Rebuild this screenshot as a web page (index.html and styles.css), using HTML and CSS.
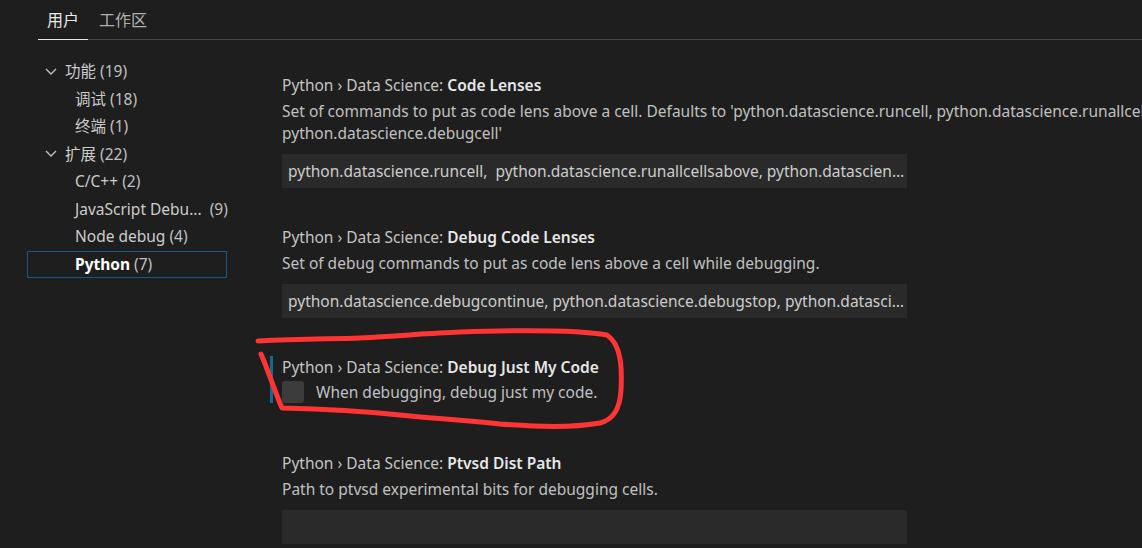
FILE: index.html
```html
<!DOCTYPE html>
<html>
<head>
  <title>Settings</title>
  <link rel="stylesheet" href="styles.css">
</head>
<body>
  <div class="tabs">
    <div class="tab active">用户</div>
    <div class="tab">工作区</div>
  </div>

  <div class="main">
    <div class="tree">
      <div class="row group"><span class="chev"><svg width="12" height="8" viewBox="0 0 12 8"><path d="M1 1l5 5 5-5" fill="none" stroke="#c5c5c5" stroke-width="1.3"/></svg></span>功能 <span class="count">(19)</span></div>
      <div class="row child">调试 <span class="count">(18)</span></div>
      <div class="row child">终端 <span class="count">(1)</span></div>
      <div class="row group"><span class="chev"><svg width="12" height="8" viewBox="0 0 12 8"><path d="M1 1l5 5 5-5" fill="none" stroke="#c5c5c5" stroke-width="1.3"/></svg></span>扩展 <span class="count">(22)</span></div>
      <div class="row child">C/C++ <span class="count">(2)</span></div>
      <div class="row child">JavaScript Debu...&nbsp; <span class="count">(9)</span></div>
      <div class="row child">Node debug <span class="count">(4)</span></div>
      <div class="row child selected"><b>Python</b> <span class="count">(7)</span></div>
    </div>

    <div class="settings">
      <div class="setting">
        <div class="title">Python › Data Science: <b>Code Lenses</b></div>
        <div class="desc">Set of commands to put as code lens above a cell. Defaults to 'python.datascience.runcell, python.datascience.runallcellsabove, python.datascience.debugcell'</div>
        <div class="input">python.datascience.runcell,  python.datascience.runallcellsabove, python.datascience.debugcell</div>
      </div>

      <div class="setting">
        <div class="title">Python › Data Science: <b>Debug Code Lenses</b></div>
        <div class="desc">Set of debug commands to put as code lens above a cell while debugging.</div>
        <div class="input">python.datascience.debugcontinue, python.datascience.debugstop, python.datascience.debugstepover</div>
      </div>

      <div class="setting focused">
        <div class="title">Python › Data Science: <b>Debug Just My Code</b></div>
        <div class="check-row">
          <span class="checkbox"></span>
          <span class="desc">When debugging, debug just my code.</span>
        </div>
      </div>

      <div class="setting">
        <div class="title">Python › Data Science: <b>Ptvsd Dist Path</b></div>
        <div class="desc">Path to ptvsd experimental bits for debugging cells.</div>
        <div class="input"></div>
      </div>
    </div>
  </div>

  <!-- hand drawn marker around the checkbox setting -->
  <svg class="scribble" width="1142" height="548" viewBox="0 0 1142 548">
    <path d="M258 341 C 300 339, 330 339, 360 338 C 400 336, 430 333, 460 332 C 520 330, 580 330, 607 335 C 622 345, 622 370, 621 390 C 620 410, 612 420, 600 423 C 570 428, 540 427, 500 424 C 460 420, 430 418, 400 415 C 360 411, 320 409, 282 408 C 276 395, 270 375, 261 354"
      fill="none" stroke="#ff3434" stroke-width="5" stroke-linecap="round" stroke-linejoin="round"/>
  </svg>
</body>
</html>
```

FILE: styles.css
```css
html, body { margin: 0; padding: 0; overflow: hidden; }
body {
  background-color: #1e1e1e;
  color: #cccccc;
  font-family: "Noto Sans", "Noto Sans CJK SC", sans-serif;
  font-size: 15.5px;
  width: 1142px;
  height: 548px;
  position: relative;
}

.tabs {
  display: flex;
  margin-left: 38px;
  height: 39px;
  border-bottom: 1px solid #454545;
}
.tab {
  padding: 0 9px;
  line-height: 40px;
  color: #b0b0b0;
  font-size: 16px;
}
.tab.active {
  color: #e7e7e7;
  border-bottom: 1px solid #e7e7e7;
  height: 39px;
  line-height: 40px;
  margin-right: 2px;
}

.main { display: flex; }

.tree {
  width: 200px;
  margin-left: 27px;
  padding-top: 18px;
  flex-shrink: 0;
}
.row {
  height: 27.5px;
  line-height: 27.5px;
  box-sizing: border-box;
  white-space: nowrap;
}
.row.group { padding-left: 18px; display: flex; align-items: center; }
.row.group .count { margin-left: 4px; }
.row.child { padding-left: 48px; }
.chev { width: 20px; display: inline-flex; align-items: center; }
.count { color: #c0c0c0; }
.row.selected {
  border: 1px solid #0e5a8c;
  padding-left: 47px;
  line-height: 25.5px;
}
.row.selected b { color: #ffffff; }

.settings {
  margin-left: 43px;
  width: 1200px;
  flex-shrink: 0;
  padding-top: 34px;
}
.setting {
  border-left: 3px solid transparent;
  padding: 0 0 0 9px;
  margin-bottom: 38px;
}
.setting.focused { border-left-color: #0f6b94; margin-bottom: 49px; }
.title {
  line-height: 22px;
  color: #c5c5c5;
}
.title b { color: #e7e7e7; font-weight: 600; }
.desc {
  line-height: 22px;
  margin-top: 4px;
  color: #c0c0c0;
  width: 1080px;
}
.input {
  margin-top: 10px;
  width: 619px;
  height: 34px;
  line-height: 34px;
  padding-left: 6px;
  background-color: #2a2a2a;
  white-space: pre;
  overflow: hidden;
  text-overflow: ellipsis;
  color: #cccccc;
}
.check-row {
  display: flex;
  align-items: center;
  margin-top: 3px;
  height: 22px;
}
.checkbox {
  width: 22px;
  height: 22px;
  border-radius: 3px;
  background-color: #3c3c3c;
  margin-right: 12px;
}
.check-row .desc { margin-top: 0; width: auto; }

.scribble {
  position: absolute;
  top: 0;
  left: 0;
  pointer-events: none;
}
```
